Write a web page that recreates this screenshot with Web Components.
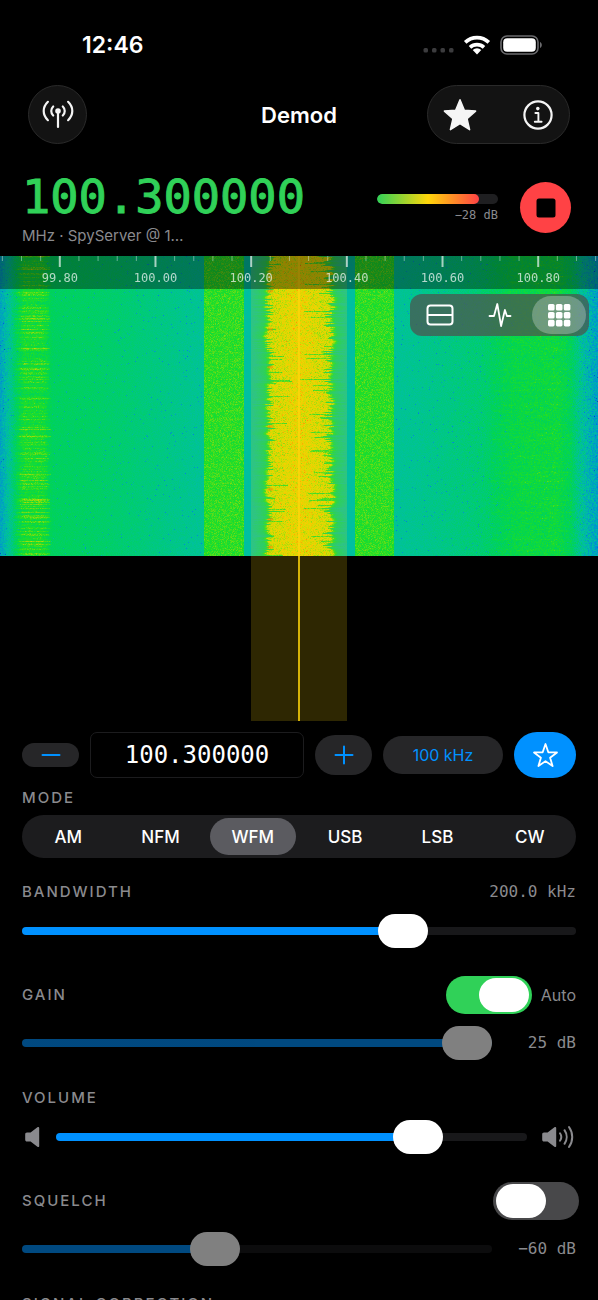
<!DOCTYPE html>
<html lang="en">
<head>
<meta charset="utf-8">
<meta name="viewport" content="width=device-width, initial-scale=1">
<title>Demod</title>
<style>
  :root {
    --accent: #0091ff;
    --green: #30d158;
    --muted: #8a8a8e;
    --fill: #1c1c1e;
    --mono: "DejaVu Sans Mono", "Liberation Mono", monospace;
  }
  body {
    margin: 0;
    height: 100vh;
    overflow: hidden;
    background: #000;
    color: #fff;
    font-family: Inter, "Liberation Sans", sans-serif;
    font-size: 16px;
  }
  .panel {
    display: flex;
    flex-direction: column;
    padding: 11px 22px;
  }
  .sliders {
    display: flex;
    flex-direction: column;
    gap: 28px;
    padding-top: 24px;
  }
</style>
</head>
<body>
  <status-bar time="12:46"></status-bar>
  <nav-bar>Demod</nav-bar>
  <frequency-header frequency="100.300000" level="-28">MHz · SpyServer @ 1…</frequency-header>
  <waterfall-view start="99.675" span="1.25" center="100.3" bandwidth="0.2">
    <view-switch></view-switch>
  </waterfall-view>

  <main class="panel">
    <tune-bar frequency="100.300000" step="100 kHz"></tune-bar>
    <mode-picker modes="AM,NFM,WFM,USB,LSB,CW" selected="WFM"></mode-picker>

    <div class="sliders">
      <level-slider label="BANDWIDTH" value="70.6" readout="200.0 kHz" readout-at="top"></level-slider>
      <level-slider label="GAIN" value="100" readout="25 dB" disabled>
        <toggle-switch slot="aside" name="Auto gain" checked>Auto</toggle-switch>
      </level-slider>
      <level-slider label="VOLUME" value="80">
        <svg slot="start" width="20" height="24" viewBox="0 0 20 24" fill="#8a8a8e">
          <path d="M5 7.500h3.600l6.800-5.200c1-.8 1.800-.4 1.800.7v18c0 1.100-.8 1.500-1.800.7L8.600 16.500H5c-1.100 0-1.800-.7-1.800-1.800V9.300c0-1.100.7-1.800 1.800-1.800z"/>
        </svg>
        <svg slot="end" width="35" height="26" viewBox="0 0 35 26" fill="none" stroke="#8a8a8e" stroke-width="2" stroke-linecap="round">
          <path fill="#8a8a8e" stroke="none" d="M3 8.500h3.600l6.800-5.200c1-.8 1.800-.4 1.800.7v18c0 1.100-.8 1.500-1.800.7L6.600 17.500H3c-1.100 0-1.800-.7-1.800-1.800v-5.400c0-1.100.7-1.800 1.800-1.800z"/>
          <path d="M19 9.200c1.600 2.300 1.600 5.300 0 7.600M23.500 6.200c2.900 4.100 2.900 9.500 0 13.600M28 3c4.300 6.100 4.300 13.900 0 20"/>
        </svg>
      </level-slider>
      <level-slider label="SQUELCH" value="40" readout="−60 dB" disabled>
        <toggle-switch slot="aside" name="Squelch"></toggle-switch>
      </level-slider>
      <level-slider label="SIGNAL CORRECTION" value="50"></level-slider>
    </div>
  </main>

<script>
const STAR = "M12 1.800l2.900 7 7.500.6-5.700 5 1.700 7.400-6.400-4-6.400 4 1.700-7.400-5.700-5 7.500-.6z";
const THIN_STAR = "M12 1.800l2.500 7.300 7.700.2-6.100 4.700 2.200 7.400-6.300-4.400-6.300 4.400 2.200-7.400-6.100-4.700 7.700-.2z";

class StatusBar extends HTMLElement {
  constructor() {
    super();
    this.attachShadow({ mode: "open" });
    this.shadowRoot.innerHTML = `
    <style>
      :host {
        display: flex;
        align-items: center;
        justify-content: space-between;
        box-sizing: border-box;
        height: 85px;
        padding: 4px 55px 0 82px;
        font-size: 23px;
        font-weight: 600;
      }
      .icons {
        display: flex;
        align-items: center;
        gap: 9px;
      }
    </style>
    <span id="time"></span>
    <div class="icons">
      <svg width="31" height="20" viewBox="0 0 31 20" fill="#3c3c3e">
        <rect x="0.500" y="13" width="4.500" height="4.500" rx="1.500"/>
        <rect x="9" y="13" width="4.500" height="4.500" rx="1.500"/>
        <rect x="17.500" y="13" width="4.500" height="4.500" rx="1.500"/>
        <rect x="26" y="13" width="4.500" height="4.500" rx="1.500"/>
      </svg>
      <svg width="28" height="20" viewBox="0 0 28 20" fill="none" stroke="#fff" stroke-width="3.600">
        <path d="M2.200 7.400a17 17 0 0 1 23.600 0M7 12.300a10.400 10.400 0 0 1 14 0"/>
        <path d="M9.700 14.900a6.400 6.400 0 0 1 8.600 0L14 19.400z" fill="#fff" stroke="none"/>
      </svg>
      <svg width="43" height="20" viewBox="0 0 43 20">
        <rect x="1" y="1" width="37" height="18" rx="6" fill="none" stroke="#6b6b6e" stroke-width="1.600"/>
        <rect x="3.200" y="3.200" width="32.600" height="13.600" rx="4" fill="#fff"/>
        <path d="M40 7c2.400.8 2.400 5.200 0 6z" fill="#6b6b6e"/>
      </svg>
    </div>
    `;
    this.shadowRoot.querySelector("#time").textContent = this.getAttribute("time");
  }
}

class NavBar extends HTMLElement {
  constructor() {
    super();
    this.attachShadow({ mode: "open" });
    this.shadowRoot.innerHTML = `
    <style>
      :host {
        display: grid;
        grid-template-columns: 1fr auto 1fr;
        align-items: center;
        padding: 0 28px;
      }
      h1 {
        margin: 0;
        font-size: 22px;
        font-weight: 600;
      }
      button {
        display: grid;
        place-items: center;
        padding: 0;
        border: 0;
        background: none;
        color: #f5f5f5;
        cursor: pointer;
      }
      .round,
      .pair {
        box-sizing: border-box;
        height: 59px;
        border: 1px solid #2a2a2a;
        border-radius: 30px;
        background: #131313;
      }
      .round {
        width: 59px;
      }
      .pair {
        display: flex;
        justify-self: end;
        align-items: center;
        justify-content: space-between;
        width: 143px;
        padding: 0 14px;
      }
    </style>
    <button class="round" aria-label="Source">
      <svg width="34" height="34" viewBox="0 0 34 34" fill="none" stroke="currentColor" stroke-width="2.200" stroke-linecap="round">
        <circle cx="17" cy="13" r="2.800" fill="currentColor" stroke="none"/>
        <path d="M17 13v16M12.200 8.500c-2.600 2.500-2.600 6.500 0 9M21.800 8.500c2.600 2.500 2.600 6.500 0 9M6.900 3.800c-5.600 5.400-5.600 13 0 18.400M27.100 3.800c5.600 5.400 5.600 13 0 18.400"/>
      </svg>
    </button>
    <h1><slot></slot></h1>
    <div class="pair">
      <button aria-label="Favourites">
        <svg width="36" height="36" viewBox="0 0 24 24" fill="currentColor" stroke="currentColor" stroke-width="1" stroke-linejoin="round">
          <path d="${STAR}"/>
        </svg>
      </button>
      <button aria-label="Info">
        <svg width="34" height="34" viewBox="0 0 34 34" fill="none" stroke="currentColor" stroke-width="2.200" stroke-linecap="round">
          <circle cx="17" cy="17" r="13.600"/>
          <circle cx="16.800" cy="10.600" r="1.800" fill="currentColor" stroke="none"/>
          <path d="M14.400 15h3v8.600M13.800 23.700h6.800" stroke-width="1.900" stroke-linejoin="round"/>
        </svg>
      </button>
    </div>
    `;
  }
}

class FrequencyHeader extends HTMLElement {
  constructor() {
    super();
    const level = Number(this.getAttribute("level"));
    this.attachShadow({ mode: "open" });
    this.shadowRoot.innerHTML = `
    <style>
      :host {
        display: flex;
        align-items: center;
        gap: 22px;
        padding: 27px 27px 12px 22px;
      }
      .tuned {
        flex: 1;
      }
      .frequency {
        font: 47px/52px var(--mono);
        color: var(--green);
        -webkit-text-stroke: 1px var(--green);
      }
      .source {
        margin-top: 5px;
        font-size: 15px;
        line-height: 16px;
        color: var(--muted);
      }
      .meter {
        width: 121px;
        text-align: right;
      }
      .bar {
        height: 10px;
        border-radius: 5px;
        background: #1f1f21;
        overflow: hidden;
      }
      .bar div {
        width: 84%;
        height: 100%;
        border-radius: 5px;
        background: linear-gradient(90deg, var(--green), #ffd60a 50%, #ff4245);
      }
      .db {
        margin-top: 4px;
        font: 12px/14px var(--mono);
        color: var(--muted);
      }
      button {
        display: grid;
        place-items: center;
        width: 51px;
        height: 51px;
        padding: 0;
        border: 0;
        border-radius: 50%;
        background: #ff4245;
        cursor: pointer;
      }
    </style>
    <div class="tuned">
      <div class="frequency">${this.getAttribute("frequency")}</div>
      <div class="source"><slot></slot></div>
    </div>
    <div class="meter">
      <div class="bar" role="meter" aria-label="Signal" aria-valuemin="-120" aria-valuemax="0" aria-valuenow="${level}"><div></div></div>
      <div class="db">−${Math.abs(level)} dB</div>
    </div>
    <button aria-label="Stop">
      <svg width="20" height="20" viewBox="0 0 20 20"><rect x="0.500" y="0.500" width="19" height="19" rx="2.500"/></svg>
    </button>
    `;
  }
}

// [position, red, green, blue]
const PALETTE = [
  [0, 0, 50, 180],
  [0.2, 0, 130, 225],
  [0.36, 0, 192, 160],
  [0.5, 0, 212, 85],
  [0.6, 30, 222, 40],
  [0.75, 205, 220, 0],
  [0.84, 245, 205, 0],
  [0.93, 255, 130, 0],
  [1, 255, 50, 0],
];

// noise floor and stations: [x, level, noise], x as a share of the width
const PROFILE = [
  [0, 0.29, 0.04],
  [0.012, 0.36, 0.04],
  [0.025, 0.46, 0.04],
  [0.04, 0.55, 0.04],
  [0.07, 0.55, 0.04],
  [0.088, 0.48, 0.02],
  [0.15, 0.47, 0.02],
  [0.2, 0.45, 0.02],
  [0.34, 0.38, 0.02],
  [0.41, 0.36, 0.01],
  [0.59, 0.36, 0.01],
  [0.7, 0.39, 0.02],
  [0.8, 0.44, 0.03],
  [0.86, 0.52, 0.04],
  [0.93, 0.54, 0.05],
  [0.955, 0.48, 0.04],
  [0.975, 0.36, 0.06],
  [1, 0.27, 0.06],
];

function lerp(table, at) {
  let i = 1;
  while (i < table.length - 1 && table[i][0] < at) i++;
  const a = table[i - 1];
  const b = table[i];
  const k = Math.min(1, Math.max(0, (at - a[0]) / (b[0] - a[0])));
  return a.map((v, n) => v + (b[n] - v) * k);
}

class WaterfallView extends HTMLElement {
  constructor() {
    super();
    this.seed = 1003;
    this.start = Number(this.getAttribute("start"));
    this.span = Number(this.getAttribute("span"));
    const center = Number(this.getAttribute("center"));
    const bandwidth = Number(this.getAttribute("bandwidth"));

    this.attachShadow({ mode: "open" });
    this.shadowRoot.innerHTML = `
    <style>
      :host {
        display: block;
        position: relative;
        height: 465px;
        overflow: hidden;
      }
      canvas {
        display: block;
        width: 100%;
        height: 300px;
      }
      .band {
        position: absolute;
        top: 0;
        bottom: 0;
        left: ${this.percent(center - bandwidth / 2)};
        width: ${(bandwidth / this.span) * 100}%;
        background: rgba(255, 214, 10, 0.18);
      }
      .band::after {
        content: "";
        position: absolute;
        top: 0;
        bottom: 0;
        left: calc(50% - 1px);
        width: 2px;
        background: rgba(255, 214, 10, 0.8);
      }
      .ruler {
        position: absolute;
        top: 0;
        left: 0;
        right: 0;
        height: 33px;
        background: rgba(0, 0, 0, 0.38);
        font: 12px/16px var(--mono);
        color: rgba(255, 255, 255, 0.7);
      }
      .ruler svg {
        display: block;
        width: 100%;
        height: 12px;
      }
      .ruler span {
        position: absolute;
        top: 14px;
        transform: translateX(-50%);
      }
      slot {
        position: absolute;
        top: 38px;
        right: 9px;
        display: block;
      }
    </style>
    <canvas role="img" aria-label="Waterfall"></canvas>
    <div class="band"></div>
    <div class="ruler"></div>
    <slot></slot>
    `;
  }

  connectedCallback() {
    this.drawRuler();
    this.drawWaterfall();
  }

  percent(mhz) {
    return ((mhz - this.start) / this.span) * 100 + "%";
  }

  random() {
    this.seed = (this.seed + 0x6d2b79f5) | 0;
    let t = Math.imul(this.seed ^ (this.seed >>> 15), 1 | this.seed);
    t = (t + Math.imul(t ^ (t >>> 7), 61 | t)) ^ t;
    return ((t ^ (t >>> 14)) >>> 0) / 4294967296;
  }

  noise() {
    return this.random() + this.random() + this.random() - 1.5;
  }

  drawRuler() {
    let ticks = "";
    let labels = "";
    // one tick every 40 kHz, a long one with its label every 200 kHz
    for (let khz = 99680; khz < 100925; khz += 40) {
      const x = this.percent(khz / 1000);
      const major = khz % 200 === 0;
      ticks += `<line x1="${x}" x2="${x}" y1="0" y2="${major ? 11 : 5}" stroke="#fff" stroke-width="${major ? 2 : 1}" stroke-opacity="${major ? 0.65 : 0.4}"/>`;
      if (major) {
        labels += `<span style="left: ${x}">${(khz / 1000).toFixed(2)}</span>`;
      }
    }
    this.shadowRoot.querySelector(".ruler").innerHTML = `<svg>${ticks}</svg>${labels}`;
  }

  drawWaterfall() {
    const canvas = this.shadowRoot.querySelector("canvas");
    const w = (canvas.width = this.clientWidth || 598);
    const h = (canvas.height = 300);
    const ctx = canvas.getContext("2d");
    const image = ctx.createImageData(w, h);
    const base = [];
    for (let x = 0; x < w; x++) base.push(lerp(PROFILE, x / w));

    let burst = 0;
    let swing = 0;
    for (let y = 0; y < h; y++) {
      burst = burst * 0.6 + this.noise() * 0.6;
      swing = swing * 0.85 + this.noise() * 0.0025;
      // the main station's edges fray row by row, with a deep dropout now and then
      const left = 0.44 + swing + Math.pow(this.random(), 4) * 0.012;
      const right = 0.562 - swing - Math.pow(this.random(), 3) * 0.016;
      const dipL = this.random() < 0.07 ? this.random() * 0.045 : 0;
      const dipR = this.random() < 0.16 ? this.random() * 0.05 : 0;
      const streak = Math.pow(this.random(), 2);
      const reach = 0.074 + streak * 0.01;
      let smear = 0;

      for (let x = 0; x < w; x++) {
        const f = x / w;
        let level = base[x][1];
        let grain = base[x][2];
        smear = smear * 0.75 + this.noise() * 0.45;

        if (f > 0.341 && f < 0.407 || f > 0.592 && f < 0.658) {
          level = 0.61 + smear * 0.012;
          grain = 0.045;
        } else if (f > 0.018 && f < reach) {
          const k = Math.min(1, (f - 0.018) / 0.015);
          level += k * (streak * 0.11 + burst * 0.035 + smear * 0.04);
        } else if (f > 0.82 && f < 0.955) {
          level += Math.max(0, burst * 0.03 + smear * 0.05);
        } else if (f > 0.42 && f < 0.58) {
          const edge = Math.min(f - left, right - f);
          const k = Math.min(1, Math.max(0, edge / 0.009));
          const skirt = Math.min(1, Math.max(0, edge / 0.02 + 1));
          level += skirt * 0.1 + k * 0.29;
          grain = 0.012 + k * 0.05;
          if (dipL && f < left + dipL || dipR && f > right - dipR) {
            level -= k * 0.15;
          }
          level += Math.max(0, 1 - Math.abs(f - 0.5) / 0.045) * 0.05;
          level += k * smear * 0.03;
        }

        level += this.noise() * grain * 1.3;
        // stray cold bins in the floor, hot ones inside the carrier
        if (level < 0.5 && (f < 0.34 || f > 0.66) && this.random() < 0.01) level -= 0.1 + this.random() * 0.1;
        if (level > 0.78 && this.random() < 0.04) level += 0.06;

        const c = lerp(PALETTE, Math.min(1, Math.max(0, level)));
        const i = (y * w + x) * 4;
        image.data[i] = c[1];
        image.data[i + 1] = c[2];
        image.data[i + 2] = c[3];
        image.data[i + 3] = 255;
      }
    }
    ctx.putImageData(image, 0, 0);

    ctx.fillStyle = "rgba(255, 90, 0, 0.4)";
    for (let y = 35; y < h; y += 24 + this.random() * 40) {
      ctx.beginPath();
      ctx.ellipse(w * 0.452, y, 3, 1.5, 0, 0, Math.PI * 2);
      ctx.fill();
    }
  }
}

class ViewSwitch extends HTMLElement {
  constructor() {
    super();
    this.attachShadow({ mode: "open" });
    this.shadowRoot.innerHTML = `
    <style>
      :host {
        display: flex;
        box-sizing: border-box;
        width: 179px;
        height: 42px;
        padding: 2px 0;
        border-radius: 12px;
        background: rgba(76, 84, 80, 0.74);
      }
      label {
        flex: 1;
        display: grid;
        place-items: center;
        margin: 0 3px;
        border-radius: 19px;
        cursor: pointer;
      }
      label:has(:checked) {
        background: rgba(255, 255, 255, 0.27);
      }
      input {
        position: absolute;
        opacity: 0;
        pointer-events: none;
      }
    </style>
    <label><input type="radio" name="view" aria-label="Split">
      <svg width="28" height="22" viewBox="0 0 28 22" fill="none" stroke="#fff" stroke-width="2">
        <rect x="1.500" y="1.500" width="25" height="19" rx="3"/><path d="M1.500 11h25"/>
      </svg>
    </label>
    <label><input type="radio" name="view" aria-label="Spectrum">
      <svg width="24" height="26" viewBox="0 0 24 26" fill="none" stroke="#fff" stroke-width="1.800" stroke-linecap="round" stroke-linejoin="round">
        <path d="M1.500 14h4.500L9.300 2l3.800 22 3.800-16 2 6h3.600"/>
      </svg>
    </label>
    <label><input type="radio" name="view" aria-label="Waterfall" checked>
      <svg width="24" height="24" viewBox="0 0 24 24" fill="#fff">
        <rect x="1" y="1" width="6.600" height="6.600" rx="1.600"/><rect x="8.900" y="1" width="6.600" height="6.600" rx="1.600"/><rect x="16.800" y="1" width="6.600" height="6.600" rx="1.600"/>
        <rect x="1" y="8.900" width="6.600" height="6.600" rx="1.600"/><rect x="8.900" y="8.900" width="6.600" height="6.600" rx="1.600"/><rect x="16.800" y="8.900" width="6.600" height="6.600" rx="1.600"/>
        <rect x="1" y="16.800" width="6.600" height="6.600" rx="1.600"/><rect x="8.900" y="16.800" width="6.600" height="6.600" rx="1.600"/><rect x="16.800" y="16.800" width="6.600" height="6.600" rx="1.600"/>
      </svg>
    </label>
    `;
  }
}

class TuneBar extends HTMLElement {
  constructor() {
    super();
    this.attachShadow({ mode: "open" });
    this.shadowRoot.innerHTML = `
    <style>
      :host {
        display: flex;
        align-items: center;
        gap: 11px;
      }
      button {
        flex: none;
        display: grid;
        place-items: center;
        width: 57px;
        padding: 0;
        border: 0;
        border-radius: 20px;
        background: #262628;
        color: var(--accent);
        font: inherit;
        cursor: pointer;
      }
      .minus {
        height: 24px;
      }
      .plus {
        height: 40px;
      }
      .step {
        width: 120px;
        height: 38px;
      }
      .favourite {
        width: 62px;
        height: 46px;
        border-radius: 23px;
        background: var(--accent);
        color: #fff;
      }
      input {
        flex: 1;
        min-width: 0;
        box-sizing: border-box;
        height: 46px;
        padding: 0;
        border: 1px solid #1c1c1e;
        border-radius: 7px;
        background: #000;
        color: #fff;
        font: 24px/30px var(--mono);
        text-align: center;
      }
    </style>
    <button class="minus" aria-label="Step down">
      <svg width="20" height="20" viewBox="0 0 20 20" stroke="currentColor" stroke-width="2" stroke-linecap="round"><path d="M1.500 10h17"/></svg>
    </button>
    <input type="text" inputmode="decimal" aria-label="Frequency" value="${this.getAttribute("frequency")}">
    <button class="plus" aria-label="Step up">
      <svg width="20" height="20" viewBox="0 0 20 20" stroke="currentColor" stroke-width="2" stroke-linecap="round"><path d="M1.500 10h17M10 1.500v17"/></svg>
    </button>
    <button class="step">${this.getAttribute("step")}</button>
    <button class="favourite" aria-label="Add favourite">
      <svg width="27" height="27" viewBox="0 0 24 24" fill="none" stroke="currentColor" stroke-width="1.600" stroke-linejoin="round"><path d="${THIN_STAR}"/></svg>
    </button>
    `;
  }
}

class ModePicker extends HTMLElement {
  constructor() {
    super();
    this.attachShadow({ mode: "open" });
    this.shadowRoot.innerHTML = `
    <style>
      :host {
        display: block;
        padding-top: 10px;
      }
      fieldset {
        min-width: 0;
        margin: 0;
        padding: 0;
        border: 0;
      }
      legend {
        padding: 0 0 7px;
        font-size: 15px;
        line-height: 20px;
        font-weight: 500;
        letter-spacing: 2px;
        color: var(--muted);
      }
      .modes {
        display: flex;
        box-sizing: border-box;
        height: 43px;
        padding: 3px 0;
        border-radius: 22px;
        background: var(--fill);
      }
      label {
        flex: 1 1 0;
        display: grid;
        place-items: center;
        margin: 0 3px;
        border-radius: 19px;
        font-size: 17px;
        font-weight: 500;
        cursor: pointer;
      }
      label:has(:checked) {
        background: #5b5b60;
      }
      input {
        position: absolute;
        opacity: 0;
        pointer-events: none;
      }
    </style>
    <fieldset>
      <legend>MODE</legend>
      <div class="modes"></div>
    </fieldset>
    `;
    const list = this.shadowRoot.querySelector(".modes");
    for (const mode of this.getAttribute("modes").split(",")) {
      const label = document.createElement("label");
      const input = document.createElement("input");
      input.type = "radio";
      input.name = "mode";
      input.value = mode;
      input.checked = mode === this.getAttribute("selected");
      label.append(input, mode);
      list.appendChild(label);
    }
  }
}

class ToggleSwitch extends HTMLElement {
  constructor() {
    super();
    this.attachShadow({ mode: "open" });
    this.shadowRoot.innerHTML = `
    <style>
      :host {
        display: block;
        margin-right: -3px;
      }
      :host([checked]) {
        margin-right: 0;
      }
      label {
        display: flex;
        align-items: center;
        gap: 9px;
        color: var(--muted);
      }
      input {
        appearance: none;
        display: flex;
        box-sizing: border-box;
        width: 86px;
        height: 38px;
        margin: 0;
        padding: 2px 3px;
        border-radius: 19px;
        background: #48484a;
        cursor: pointer;
      }
      input::before {
        content: "";
        width: 50px;
        border-radius: 17px;
        background: #fff;
      }
      input:checked {
        justify-content: flex-end;
        background: var(--green);
      }
    </style>
    <label><input type="checkbox" role="switch"><slot></slot></label>
    `;
    const input = this.shadowRoot.querySelector("input");
    input.checked = this.hasAttribute("checked");
    input.setAttribute("aria-label", this.getAttribute("name"));
    if (!this.textContent) this.shadowRoot.querySelector("slot").remove();
  }
}

class LevelSlider extends HTMLElement {
  constructor() {
    super();
    this.attachShadow({ mode: "open" });
    this.shadowRoot.innerHTML = `
    <style>
      :host {
        display: flex;
        flex-direction: column;
        gap: 12px;
      }
      .head,
      .row {
        display: flex;
        align-items: center;
        justify-content: space-between;
      }
      label {
        font-size: 15px;
        line-height: 20px;
        font-weight: 500;
        letter-spacing: 2px;
        color: var(--muted);
      }
      output {
        font: 16px/20px var(--mono);
        color: var(--muted);
        text-align: right;
      }
      .row output {
        width: 84px;
      }
      ::slotted([slot="start"]) {
        margin-right: 14px;
      }
      ::slotted([slot="end"]) {
        margin-left: 14px;
      }
      input {
        appearance: none;
        flex: 1;
        min-width: 0;
        height: 34px;
        margin: 0;
        background: none;
        cursor: pointer;
      }
      input:disabled {
        opacity: 0.5;
      }
      input::-webkit-slider-runnable-track {
        height: 8px;
        border-radius: 4px;
        background: linear-gradient(90deg, var(--accent) var(--value), #18181a var(--value));
      }
      input::-webkit-slider-thumb {
        appearance: none;
        width: 50px;
        height: 34px;
        margin-top: -13px;
        border-radius: 17px;
        background: #fff;
      }
    </style>
    <div class="head">
      <label for="range">${this.getAttribute("label")}</label>
      <slot name="aside"></slot>
    </div>
    <div class="row">
      <slot name="start"></slot>
      <input id="range" type="range" min="0" max="100" step="any">
      <slot name="end"></slot>
    </div>
    `;
    const input = this.shadowRoot.querySelector("input");
    input.value = this.getAttribute("value");
    input.disabled = this.hasAttribute("disabled");
    input.style.setProperty("--value", input.value + "%");
    input.addEventListener("input", function () {
      this.style.setProperty("--value", this.value + "%");
    });

    if (this.hasAttribute("readout")) {
      const output = document.createElement("output");
      output.textContent = this.getAttribute("readout");
      const place = this.getAttribute("readout-at") === "top" ? ".head" : ".row";
      this.shadowRoot.querySelector(place).appendChild(output);
    }
  }
}

customElements.define("status-bar", StatusBar);
customElements.define("nav-bar", NavBar);
customElements.define("frequency-header", FrequencyHeader);
customElements.define("waterfall-view", WaterfallView);
customElements.define("view-switch", ViewSwitch);
customElements.define("tune-bar", TuneBar);
customElements.define("mode-picker", ModePicker);
customElements.define("toggle-switch", ToggleSwitch);
customElements.define("level-slider", LevelSlider);
</script>
</body>
</html>
